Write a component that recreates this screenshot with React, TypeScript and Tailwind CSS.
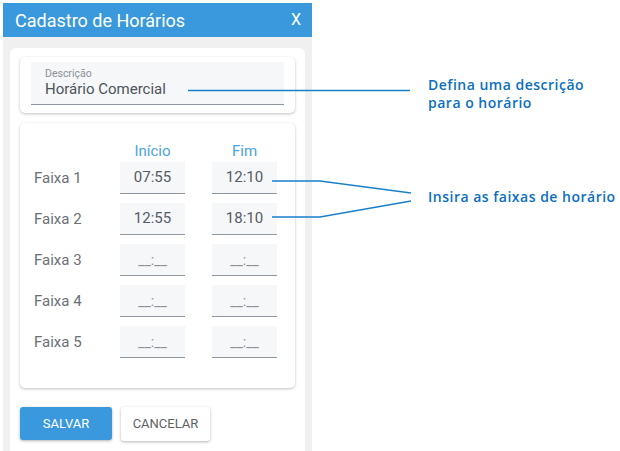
import React from "react";

const ROWS: { label: string; start: string; end: string }[] = [
  { label: "Faixa 1", start: "07:55", end: "12:10" },
  { label: "Faixa 2", start: "12:55", end: "18:10" },
  { label: "Faixa 3", start: "", end: "" },
  { label: "Faixa 4", start: "", end: "" },
  { label: "Faixa 5", start: "", end: "" },
];

function TimeBox({ value }: { value: string }) {
  return (
    <div className="w-[65px] h-[32px] bg-[#f5f7f9] border-b border-[#8e979f] flex items-center justify-center text-[15px]">
      {value ? (
        <span className="text-[#555c63]">{value}</span>
      ) : (
        <span className="text-[#8c9196] text-[14px] pt-[2px]">__:__</span>
      )}
    </div>
  );
}

export default function App() {
  return (
    <div
      className="relative w-[620px] h-[451px] bg-white overflow-hidden"
      style={{ fontFamily: "Roboto, 'Liberation Sans', sans-serif" }}
    >
      <div className="flex">
        <div className="ml-[3px] mt-[3px] w-[309px] h-[448px] bg-[#f0f0f0] flex flex-col">
          <div className="h-[34px] bg-[#3a99dc] flex items-center justify-between pl-[12px] pr-[11px] text-white">
            <span className="text-[18px]">Cadastro de Horários</span>
            <span className="text-[16px]">X</span>
          </div>
          <div className="mx-[7px] mt-[11px] flex-1 bg-white rounded-t-[6px] px-[10px] pt-[9px] flex flex-col">
            <div className="h-[56px] rounded-[5px] bg-white shadow-[0_1px_3px_rgba(0,0,0,0.25)] px-[11px] pt-[5px]">
              <div className="h-[43px] bg-[#f5f7f9] border-b border-[#8e979f] pl-[14px] pt-[5px]">
                <div className="text-[10.5px] leading-[13px] text-[#8c9196]">Descrição</div>
                <div className="text-[15px] leading-[19px] text-[#4d545b]">Horário Comercial</div>
              </div>
            </div>
            <div className="mt-[10px] h-[265px] rounded-[5px] bg-white shadow-[0_1px_3px_rgba(0,0,0,0.25)] pl-[14px] pt-[18px]">
              <div className="flex text-[15px] text-[#4aa3e6] h-[20px] items-center">
                <div className="w-[86px]" />
                <div className="w-[65px] text-center">Início</div>
                <div className="w-[27px]" />
                <div className="w-[65px] text-center">Fim</div>
              </div>
              <div className="flex flex-col gap-[9px] mt-[1px]">
                {ROWS.map((r) => (
                  <div key={r.label} className="flex items-center">
                    <div className="w-[86px] text-[15px] text-[#6a7076]">{r.label}</div>
                    <TimeBox value={r.start} />
                    <div className="w-[27px]" />
                    <TimeBox value={r.end} />
                  </div>
                ))}
              </div>
            </div>
            <div className="mt-[19px] flex gap-[9px]">
              <button className="w-[92px] h-[33px] bg-[#3a99dc] rounded-[3px] text-white text-[13px] shadow-[0_1px_3px_rgba(0,0,0,0.3)]">
                SALVAR
              </button>
              <button className="w-[89px] h-[34px] bg-white rounded-[3px] text-[#5c6268] text-[13px] shadow-[0_1px_3px_rgba(0,0,0,0.3)]">
                CANCELAR
              </button>
            </div>
          </div>
        </div>
        <div
          className="ml-[116px] pt-[76px] flex flex-col text-[#0b6fc2] text-[14px] font-semibold leading-[18px] tracking-[0.5px]"
          style={{ fontFamily: "'Open Sans', sans-serif" }}
        >
          <div>Defina uma descrição</div>
          <div>para o horário</div>
          <div className="mt-[76px]">Insira as faixas de horário</div>
        </div>
      </div>
      <svg className="absolute inset-0 pointer-events-none" width="620" height="451">
        <g stroke="#1a7fcb" strokeWidth="1.3" fill="none">
          <line x1="188" y1="90.5" x2="410" y2="90.5" />
          <polyline points="272,181 320,181 411,193" />
          <polyline points="272,217 320,217 411,201" />
        </g>
      </svg>
    </div>
  );
}
